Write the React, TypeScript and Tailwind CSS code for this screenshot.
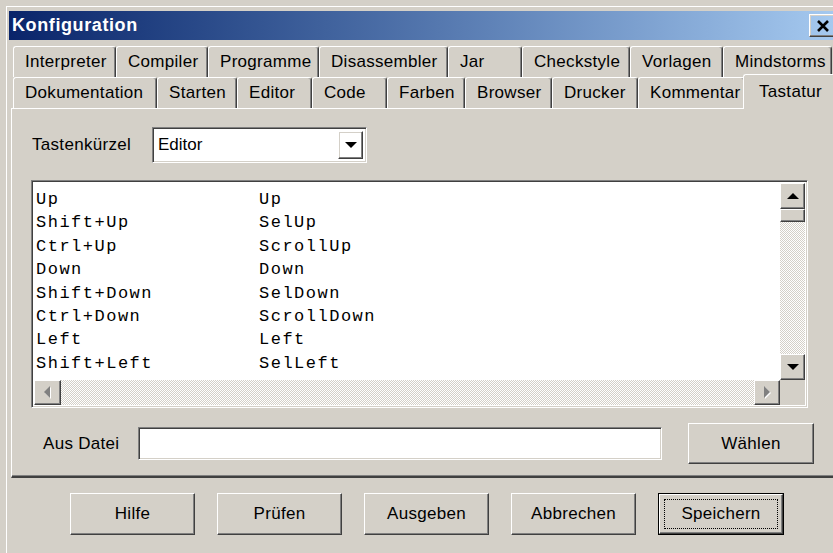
type TabDef = { label: string; w: string };

const TOP_ROW: TabDef[] = [
  { label: "Interpreter", w: "w-[103px]" },
  { label: "Compiler", w: "w-[92px]" },
  { label: "Programme", w: "w-[111px]" },
  { label: "Disassembler", w: "w-[129px]" },
  { label: "Jar", w: "w-[74px]" },
  { label: "Checkstyle", w: "w-[108px]" },
  { label: "Vorlagen", w: "w-[93px]" },
  { label: "Mindstorms", w: "w-[109px]" },
];

const BOTTOM_ROW: TabDef[] = [
  { label: "Dokumentation", w: "w-[144px]" },
  { label: "Starten", w: "w-[80px]" },
  { label: "Editor", w: "w-[75px]" },
  { label: "Code", w: "w-[75px]" },
  { label: "Farben", w: "w-[78px]" },
  { label: "Browser", w: "w-[87px]" },
  { label: "Drucker", w: "w-[86px]" },
  { label: "Kommentar", w: "w-[107px]" },
];

const SHORTCUTS: [string, string][] = [
  ["Up", "Up"],
  ["Shift+Up", "SelUp"],
  ["Ctrl+Up", "ScrollUp"],
  ["Down", "Down"],
  ["Shift+Down", "SelDown"],
  ["Ctrl+Down", "ScrollDown"],
  ["Left", "Left"],
  ["Shift+Left", "SelLeft"],
];

// classic 3d bevels
const RAISED =
  "border border-t-white border-l-white border-r-[#404040] border-b-[#404040] shadow-[inset_-1px_-1px_#808080,inset_1px_1px_#d4d0c8]";
const SUNKEN =
  "border border-t-[#808080] border-l-[#808080] border-r-white border-b-white shadow-[inset_1px_1px_#404040,inset_-1px_-1px_#d4d0c8]";
const DITHER =
  "bg-[image:repeating-conic-gradient(#d4d0c8_0_25%,#ffffff_0_50%)] bg-[length:2px_2px]";

function Arrow({ dir, disabled }: { dir: "up" | "down" | "left" | "right"; disabled?: boolean }) {
  const paths = {
    up: "M6 0 L12 6 L0 6 Z",
    down: "M0 0 L12 0 L6 6 Z",
    left: "M0 6 L6 0 L6 12 Z",
    right: "M0 0 L6 6 L0 12 Z",
  };
  const vertical = dir === "up" || dir === "down";
  return (
    <svg width={vertical ? 12 : 7} height={vertical ? 7 : 13} viewBox={vertical ? "0 0 12 7" : "0 0 7 13"}>
      {disabled ? <path d={paths[dir]} fill="#ffffff" transform="translate(1 1)" /> : null}
      <path d={paths[dir]} fill={disabled ? "#808080" : "#000000"} />
    </svg>
  );
}

function Tab({ tab }: { tab: TabDef }) {
  return (
    <div
      className={`${tab.w} h-full shrink-0 flex items-center pl-[11px] border-l border-t border-white border-r border-r-[#404040] rounded-t-[3px] shadow-[inset_-1px_0_#808080]`}
    >
      {tab.label}
    </div>
  );
}

function Button({ label, isDefault }: { label: string; isDefault?: boolean }) {
  if (isDefault) {
    return (
      <div className="w-[126px] h-[42px] border border-black p-0">
        <div className={`w-full h-full ${RAISED} p-[4px]`}>
          <div className="w-full h-full border border-dotted border-black flex items-center justify-center">
            {label}
          </div>
        </div>
      </div>
    );
  }
  return (
    <div className={`w-[125px] h-[42px] ${RAISED} flex items-center justify-center`}>{label}</div>
  );
}

export default function App() {
  return (
    <div className="w-[833px] h-[553px] overflow-hidden bg-[#d4d0c8] pl-[6px] pt-[6px] font-['Liberation_Sans',Arial,sans-serif] text-[17px] tracking-[0.3px] text-black">
      <div className="w-[840px] h-[560px] border-l border-t border-white pl-[2px] pt-[4px]">
        {/* title bar */}
        <div className="w-[829px] h-[29px] flex items-center justify-between pl-[3px] pr-[1px] bg-gradient-to-r from-[#0a246a] to-[#a6caf0]">
          <span className="text-white font-bold text-[18px] tracking-[0.6px]">Konfiguration</span>
          <div className={`w-[28px] h-[23px] ${RAISED} flex items-center pl-[6px]`}>
            <svg width="14" height="12" viewBox="0 0 14 12">
              <path d="M2 1 L12 11 M12 1 L2 11" stroke="#000" strokeWidth="2.6" />
            </svg>
          </div>
        </div>

        {/* tab strip, two rows */}
        <div className="mt-[6px] ml-[4px]">
          <div className="flex h-[31px]">
            {TOP_ROW.map((t) => (
              <Tab key={t.label} tab={t} />
            ))}
          </div>
          <div className="flex h-[31px] items-end">
            {BOTTOM_ROW.map((t) => (
              <Tab key={t.label} tab={t} />
            ))}
            <div className="relative z-10 -ml-[2px] -mb-[1px] w-[97px] h-[35px] shrink-0 self-end bg-[#d4d0c8] border-l border-t border-white rounded-t-[3px] pl-[15px] pt-[4px]">
              Tastatur
            </div>
          </div>
        </div>

        {/* tab page */}
        <div className="ml-[2px] w-[828px] h-[370px] border-l border-t border-white border-b-2 border-b-[#404040] shadow-[inset_0_-1px_#808080] pt-[18px] pl-[19px] flex flex-col">
          <div className="flex items-center h-[36px]">
            <span className="ml-[1px] w-[120px]">Tastenkürzel</span>
            <div className={`w-[215px] h-[36px] ${SUNKEN} bg-white flex items-center p-[3px]`}>
              <span className="flex-1 pl-[2px] tracking-[0px]">Editor</span>
              <div className={`w-[25px] h-full ${RAISED} flex items-center justify-center`}>
                <Arrow dir="down" />
              </div>
            </div>
          </div>

          {/* key list */}
          <div className={`mt-[17px] w-[777px] h-[228px] ${SUNKEN} bg-white flex flex-col p-[2px]`}>
            <div className="flex flex-1 min-h-0">
              <div className="flex-1 pt-[5px] pl-[2px] font-['Liberation_Mono','Courier_New',monospace] text-[17px] tracking-[1.5px] leading-[23.4px]">
                {SHORTCUTS.map(([key, action]) => (
                  <div key={key} className="grid grid-cols-[223px_1fr]">
                    <span>{key}</span>
                    <span>{action}</span>
                  </div>
                ))}
              </div>
              <div className={`w-[25px] h-full flex flex-col ${DITHER}`}>
                <div className={`h-[26px] ${RAISED} bg-[#d4d0c8] flex items-center justify-center`}>
                  <Arrow dir="up" />
                </div>
                <div className={`h-[13px] ${RAISED} bg-[#d4d0c8]`} />
                <div className="flex-1" />
                <div className={`h-[26px] ${RAISED} bg-[#d4d0c8] flex items-center justify-center`}>
                  <Arrow dir="down" />
                </div>
              </div>
            </div>
            <div className="flex h-[25px]">
              <div className={`flex-1 flex ${DITHER}`}>
                <div className={`w-[27px] h-full ${RAISED} bg-[#d4d0c8] flex items-center justify-center`}>
                  <Arrow dir="left" disabled />
                </div>
                <div className="flex-1" />
                <div className={`w-[26px] h-full ${RAISED} bg-[#d4d0c8] flex items-center justify-center`}>
                  <Arrow dir="right" disabled />
                </div>
              </div>
              <div className="w-[25px] h-full bg-[#d4d0c8]" />
            </div>
          </div>

          <div className="mt-[15px] flex items-center h-[41px]">
            <span className="ml-[12px] w-[95px]">Aus Datei</span>
            <div className={`w-[524px] h-[33px] ${SUNKEN} bg-white`} />
            <div className={`ml-[26px] w-[126px] h-[41px] ${RAISED} flex items-center justify-center`}>
              Wählen
            </div>
          </div>
        </div>

        {/* dialog buttons */}
        <div className="flex gap-[22px] pl-[61px] pt-[15px]">
          <Button label="Hilfe" />
          <Button label="Prüfen" />
          <Button label="Ausgeben" />
          <Button label="Abbrechen" />
          <Button label="Speichern" isDefault />
        </div>
      </div>
    </div>
  );
}
